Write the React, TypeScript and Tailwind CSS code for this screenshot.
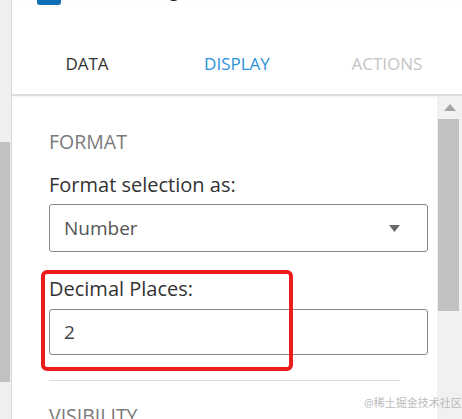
import React from "react";

export default function App() {
  const font = { fontFamily: '"Open Sans", "Noto Sans", "Noto Sans CJK SC", sans-serif' };
  return (
    <div className="w-[462px] h-[419px] overflow-hidden flex bg-white relative" style={font}>
      {/* left strip */}
      <div className="w-[12px] h-full bg-[#f0f0f0] relative border-r border-[#d6d6d6] shrink-0">
        <div className="absolute left-0 top-[142px] w-[10px] h-[240px] bg-[#c1c1c1]" />
      </div>
      <div className="flex-1 flex flex-col min-w-0">
        {/* top cut header */}
        <div className="h-[6px] overflow-hidden">
          <div className="flex items-start -mt-[19px] pl-[25px]">
            <div className="w-[24px] h-[24px] rounded-[3px] bg-[#0e6fb4]" />
            <span className="text-[18px] leading-[24px] text-[#222] ml-[48px] -mt-[3px]">Heading</span>
          </div>
        </div>
        {/* tabs */}
        <div className="h-[90px] flex border-b-2 border-[#dcdcdc] shadow-[0_1px_2px_rgba(0,0,0,0.06)]">
          <div className="flex-1 flex justify-center pt-[46px] text-[17px] leading-[24px] text-[#333]">DATA</div>
          <div className="flex-1 flex justify-center pt-[46px] text-[17px] leading-[24px] text-[#2a93dc]">DISPLAY</div>
          <div className="flex-1 flex justify-center pt-[46px] text-[17px] leading-[24px] text-[#c4c4c4]">ACTIONS</div>
        </div>
        <div className="flex-1 flex min-h-0">
          <div className="flex-1 pl-[37px] pr-[9px] pt-[33px]">
            <div className="text-[19.5px] leading-[26px] text-[#7a7a7a]">FORMAT</div>
            <div className="mt-[18px] text-[20px] leading-[24px] text-[#333]">Format selection as:</div>
            <div className="mt-[7px] h-[48px] border border-[#8a8a8a] rounded-[3px] flex items-center justify-between pl-[14px] pr-[27px]">
              <span className="text-[19px] text-[#555]">Number</span>
              <svg width="11" height="7" viewBox="0 0 11 7"><path d="M0 0 L11 0 L5.5 7 Z" fill="#6b6b6b" /></svg>
            </div>
            <div className="relative mt-[25px]">
              <div className="text-[20px] leading-[24px] text-[#333]">Decimal Places:</div>
              <div className="mt-[8px] h-[46px] border border-[#8a8a8a] rounded-[3px] flex items-center pl-[14px]">
                <span className="text-[19px] text-[#444]">2</span>
              </div>
              <div className="absolute -left-[8px] -top-[7px] w-[252px] h-[101px] border-[4px] border-[#ec1c1c] rounded-[6px] pointer-events-none" />
            </div>
            <div className="mt-[25px] w-[351px] h-px bg-[#dddddd]" />
            <div className="mt-[22px] text-[19.5px] leading-[26px] text-[#7a7a7a]">VISIBILITY</div>
          </div>
          {/* right scrollbar */}
          <div className="w-[25px] shrink-0 bg-[#f1f1f1] flex flex-col items-center pt-[8px]">
            <svg width="12" height="7" viewBox="0 0 12 7"><path d="M0 7 L12 7 L6 0 Z" fill="#a3a3a3" /></svg>
            <div className="mt-[8px] ml-[-2px] w-[21px] h-[192px] bg-[#c1c1c1]" />
          </div>
        </div>
      </div>
      <div className="absolute left-[364px] top-[396px] text-[11px] leading-[13px] text-[#b5b5b5] opacity-90">@稀土掘金技术社区</div>
    </div>
  );
}
